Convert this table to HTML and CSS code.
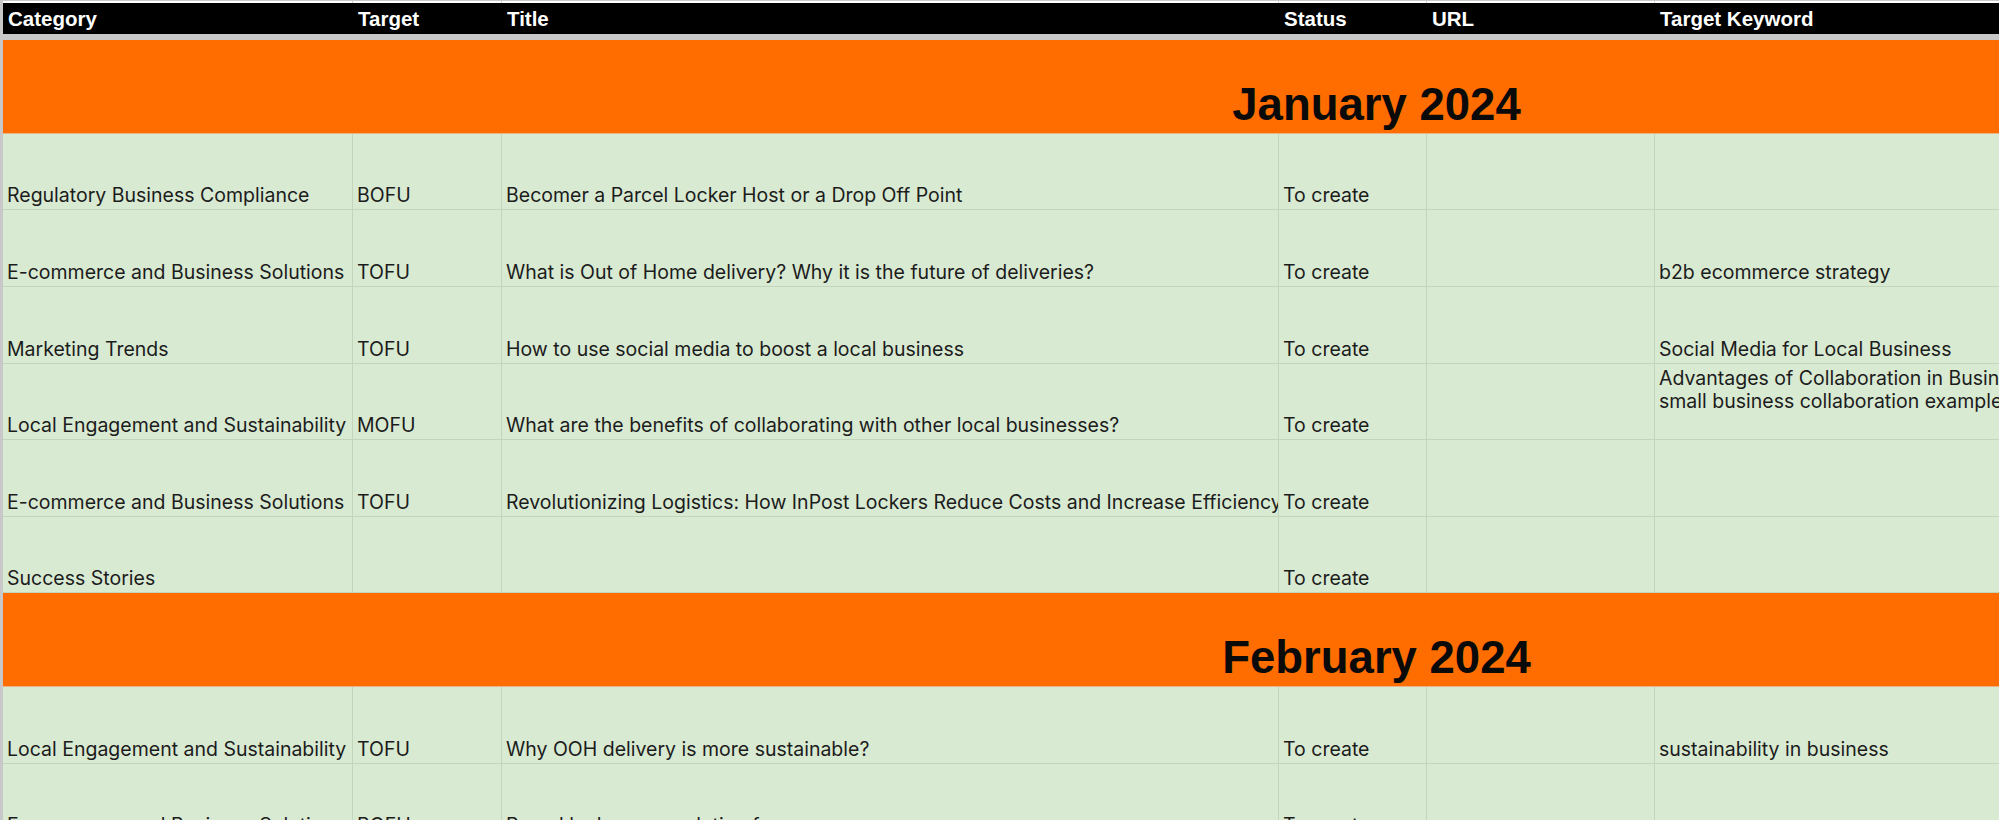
FILE: index.html
```html
<!DOCTYPE html>
<html>
  <head>
    <meta charset="UTF-8">
    <meta name="viewport" content="width=device-width, initial-scale=1.0">
    <title>Content Calendar</title>
    <link rel="stylesheet" href="styles.css">
  </head>
  <body>
    <div id="sheet">

      <div class="row row-peek">
        <div class="cell"></div>
        <div class="cell"></div>
        <div class="cell"></div>
        <div class="cell"></div>
        <div class="cell"></div>
        <div class="cell"></div>
      </div>

      <div class="row row-head">
        <div class="cell">Category</div>
        <div class="cell">Target</div>
        <div class="cell">Title</div>
        <div class="cell">Status</div>
        <div class="cell">URL</div>
        <div class="cell">Target Keyword</div>
      </div>

      <div class="freeze-line"></div>

      <div class="month">January 2024</div>

      <div class="row">
        <div class="cell">Regulatory Business Compliance</div>
        <div class="cell">BOFU</div>
        <div class="cell">Becomer a Parcel Locker Host or a Drop Off Point</div>
        <div class="cell">To create</div>
        <div class="cell"></div>
        <div class="cell"></div>
      </div>

      <div class="row">
        <div class="cell">E-commerce and Business Solutions</div>
        <div class="cell">TOFU</div>
        <div class="cell">What is Out of Home delivery? Why it is the future of deliveries?</div>
        <div class="cell">To create</div>
        <div class="cell"></div>
        <div class="cell">b2b ecommerce strategy</div>
      </div>

      <div class="row">
        <div class="cell">Marketing Trends</div>
        <div class="cell">TOFU</div>
        <div class="cell">How to use social media to boost a local business</div>
        <div class="cell">To create</div>
        <div class="cell"></div>
        <div class="cell">Social Media for Local Business</div>
      </div>

      <div class="row">
        <div class="cell">Local Engagement and Sustainability</div>
        <div class="cell">MOFU</div>
        <div class="cell">What are the benefits of collaborating with other local businesses?</div>
        <div class="cell">To create</div>
        <div class="cell"></div>
        <div class="cell cell-top">
          <p>Advantages of Collaboration in Business</p>
          <p>small business collaboration examples</p>
        </div>
      </div>

      <div class="row">
        <div class="cell">E-commerce and Business Solutions</div>
        <div class="cell">TOFU</div>
        <div class="cell">Revolutionizing Logistics: How InPost Lockers Reduce Costs and Increase Efficiency</div>
        <div class="cell">To create</div>
        <div class="cell"></div>
        <div class="cell"></div>
      </div>

      <div class="row">
        <div class="cell">Success Stories</div>
        <div class="cell"></div>
        <div class="cell"></div>
        <div class="cell">To create</div>
        <div class="cell"></div>
        <div class="cell"></div>
      </div>

      <div class="month">February 2024</div>

      <div class="row">
        <div class="cell">Local Engagement and Sustainability</div>
        <div class="cell">TOFU</div>
        <div class="cell">Why OOH delivery is more sustainable?</div>
        <div class="cell">To create</div>
        <div class="cell"></div>
        <div class="cell">sustainability in business</div>
      </div>

      <div class="row">
        <div class="cell">E-commerce and Business Solutions</div>
        <div class="cell">BOFU</div>
        <div class="cell">Parcel locker as a solution for e-commerce</div>
        <div class="cell">To create</div>
        <div class="cell"></div>
        <div class="cell"></div>
      </div>

    </div>
  </body>
</html>
```

FILE: styles.css
```css
/* Variables */
:root {
	--sheet-green: #d9ead3;
	--sheet-orange: #ff6d01;
	--grid-green: #c4d5be;
	--grid-gray: #c8c8c8;
	--text: #1c1c1c;
	--columns: 350px 149px 777px 148px 228px 1095px;
}

/* Resets */
* {
	margin: 0;
	padding: 0;
	box-sizing: border-box;
}

body {
	width: 1999px;
	height: 820px;
	overflow: hidden;
	background: #ffffff;
	font-family: Inter, "Liberation Sans", sans-serif;
	color: var(--text);
}

#sheet {
	width: 2750px;
	border-left: 3px solid var(--grid-gray);
}

/* Rows */
.row {
	display: grid;
	grid-template-columns: var(--columns);
	height: 76.6px;
	background-color: var(--sheet-green);
}

.cell {
	display: flex;
	align-items: flex-end;
	padding: 0 4px 2px 4px;
	border-right: 1px solid var(--grid-green);
	border-bottom: 1px solid var(--grid-green);
	font-size: 19.5px;
	white-space: nowrap;
	overflow: hidden;
}

.cell-top {
	flex-direction: column;
	align-items: flex-start;
	justify-content: flex-start;
	padding-top: 3px;
	line-height: 23px;
}

/* Top strip + header */
.row-peek {
	height: 3px;
	background: #ffffff;
	border-top: 1px solid var(--grid-gray);
}

.row-peek .cell {
	padding: 0;
	border-bottom: none;
	border-right-color: #d4d4d4;
}

.row-head {
	height: 31px;
	background: #000000;
}

.row-head .cell {
	align-items: center;
	padding: 0 5px;
	border: none;
	color: #ffffff;
	font-family: "Liberation Sans", Arial, sans-serif;
	font-weight: 700;
	font-size: 20.5px;
}

.freeze-line {
	height: 6px;
	background: var(--grid-gray);
}

/* Month bands */
.month {
	height: 93.8px;
	display: flex;
	align-items: flex-end;
	justify-content: center;
	padding-bottom: 2px;
	background: var(--sheet-orange);
	border-bottom: 1px solid #e9b48a;
	font-family: "Liberation Sans", Arial, sans-serif;
	font-weight: 700;
	font-size: 45.5px;
	color: #0a0a0a;
}
```
